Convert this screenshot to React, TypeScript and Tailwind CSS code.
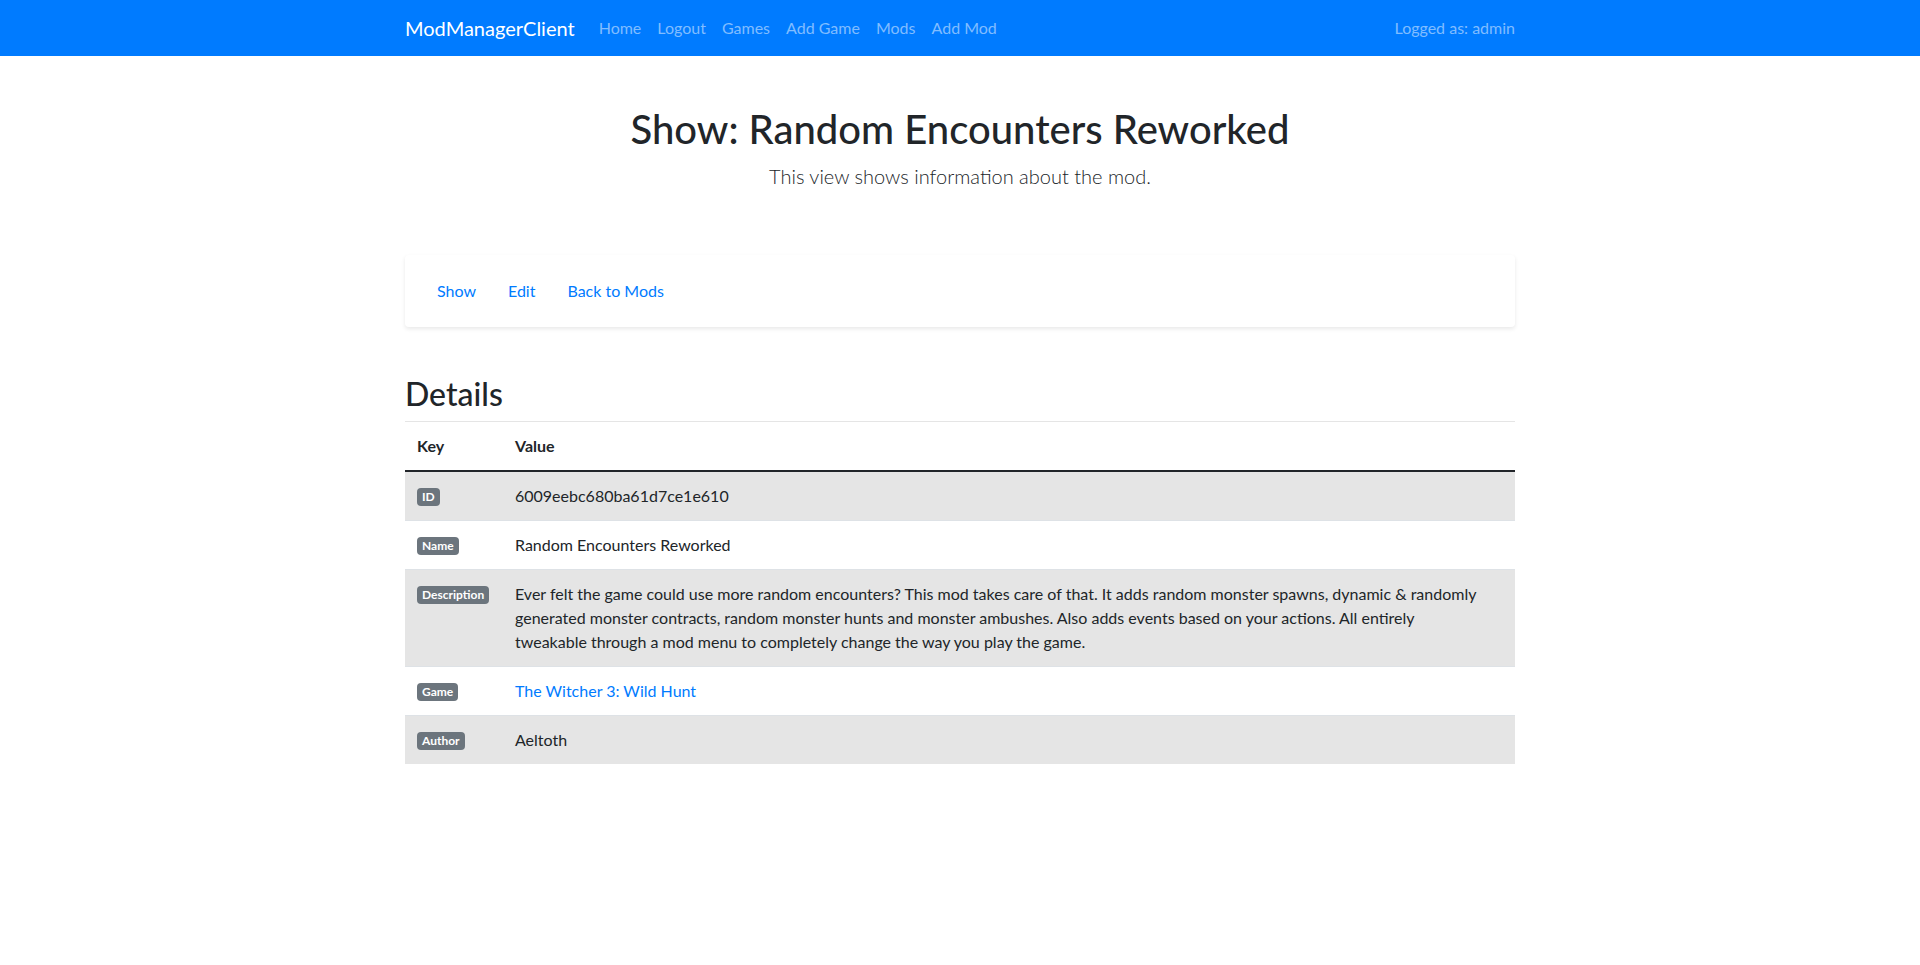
import React from "react";

const font = { fontFamily: "Lato, 'Noto Sans', 'Liberation Sans', sans-serif" };

function Badge({ children }: { children: React.ReactNode }) {
  return (
    <span className="inline-block bg-[#6c757d] text-white text-[12px] font-bold leading-none px-[5px] py-[3px] rounded-[4px] align-[1px]">
      {children}
    </span>
  );
}

export default function App() {
  const rows: { key: string; value: React.ReactNode; striped: boolean }[] = [
    { key: "ID", value: "6009eebc680ba61d7ce1e610", striped: true },
    { key: "Name", value: "Random Encounters Reworked", striped: false },
    {
      key: "Description",
      value: (
        <>
          Ever felt the game could use more random encounters? This mod takes care of that. It adds random monster spawns, dynamic &amp; randomly
          <br />
          generated monster contracts, random monster hunts and monster ambushes. Also adds events based on your actions. All entirely
          <br />
          tweakable through a mod menu to completely change the way you play the game.
        </>
      ),
      striped: true,
    },
    {
      key: "Game",
      value: <a className="text-[#007bff]">The Witcher 3: Wild Hunt</a>,
      striped: false,
    },
    { key: "Author", value: "Aeltoth", striped: true },
  ];

  return (
    <div className="min-h-[965px] bg-white text-[#212529] text-[16px] leading-[24px]" style={font}>
      <nav className="h-14 bg-[#007bff]">
        <div className="w-[1110px] mx-auto h-full flex items-center">
          <span className="text-white text-[20px] leading-[30px] mr-4">ModManagerClient</span>
          <div className="flex items-center text-[#80bdff]">
            {["Home", "Logout", "Games", "Add Game", "Mods", "Add Mod"].map((l) => (
              <a key={l} className="px-2 py-2">
                {l}
              </a>
            ))}
          </div>
          <span className="ml-auto text-[#80bdff]">Logged as: admin</span>
        </div>
      </nav>

      <main className="w-[1110px] mx-auto">
        <div className="text-center pt-[49px] pb-4">
          <h1 className="text-[40px] leading-[48px] font-medium mb-2">Show: Random Encounters Reworked</h1>
          <p className="text-[20px] leading-[30px] font-light">This view shows information about the mod.</p>
        </div>

        <div className="mt-12 bg-white rounded-[4px] shadow-[0_2px_4px_rgba(0,0,0,0.09)] p-4 flex">
          {["Show", "Edit", "Back to Mods"].map((l) => (
            <a key={l} className="px-4 py-2 text-[#007bff]">
              {l}
            </a>
          ))}
        </div>

        <h2 className="mt-12 text-[32px] leading-[38px] font-medium mb-2">Details</h2>
        <div className="border-t border-black/10" />
        <table className="w-full border-collapse">
          <thead>
            <tr>
              <th className="w-[98px] text-left font-bold p-3 border-b-2 border-[#212529]">Key</th>
              <th className="text-left font-bold p-3 border-b-2 border-[#212529]">Value</th>
            </tr>
          </thead>
          <tbody>
            {rows.map((r) => (
              <tr key={r.key} className={r.striped ? "bg-[#e5e5e5]" : "bg-white"}>
                <td className="p-3 align-top border-t border-[#dee2e6]">
                  <Badge>{r.key}</Badge>
                </td>
                <td className="p-3 align-top border-t border-[#dee2e6]">{r.value}</td>
              </tr>
            ))}
          </tbody>
        </table>
      </main>
    </div>
  );
}
